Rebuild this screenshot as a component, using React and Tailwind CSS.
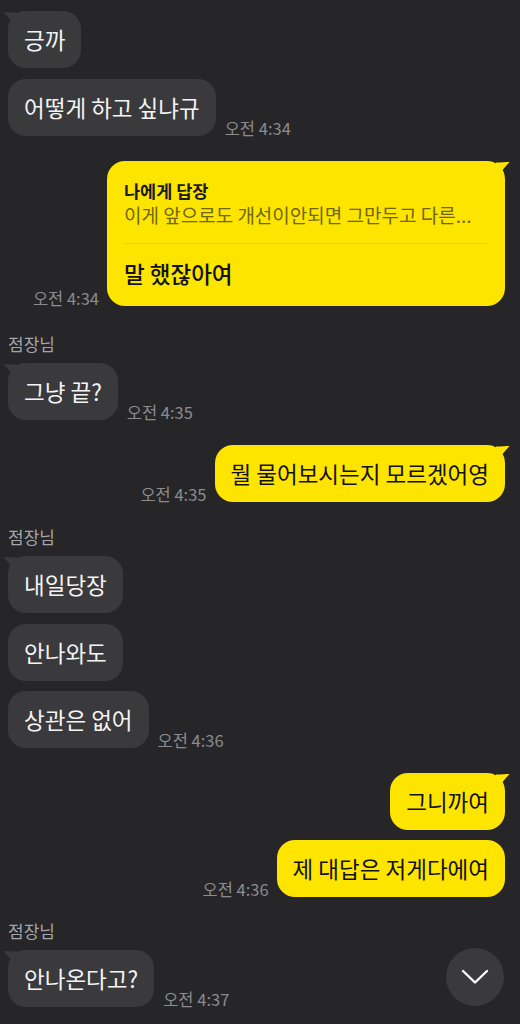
const font = { fontFamily: '"Noto Sans CJK KR", "Noto Sans", sans-serif' };

function LeftTail() {
  return (
    <svg className="absolute -left-[5px] top-0" width="14" height="18" viewBox="0 0 14 18">
      <path d="M0.5 1 C4 1 8 1.5 14 1.5 L14 18 C11 13 5 6 0.5 1 Z" fill="#3a3a3c" />
    </svg>
  );
}

function RightTail() {
  return (
    <svg className="absolute -right-[5px] top-0" width="14" height="18" viewBox="0 0 14 18">
      <path d="M13.5 1 C10 1 6 1.5 0 1.5 L0 18 C3 13 9 6 13.5 1 Z" fill="#fee500" />
    </svg>
  );
}

function Time({ children }) {
  return (
    <span className="shrink-0 text-[16.5px] leading-4 text-[#8b8b90]">
      {children}
    </span>
  );
}

function Left({ text, time, tail, className = "" }) {
  return (
    <div className={`flex items-end gap-[9px] ${className}`}>
      <div className="relative">
        {tail && <LeftTail />}
        <div className="relative rounded-[18px] bg-[#3a3a3c] px-4 py-[14px] text-[22.5px] leading-[29px] text-[#f4f4f5]">
          {text}
        </div>
      </div>
      {time && <Time>{time}</Time>}
    </div>
  );
}

function Right({ text, time, tail, className = "" }) {
  return (
    <div className={`flex items-end justify-end gap-[8px] ${className}`}>
      {time && <Time>{time}</Time>}
      <div className="relative">
        {tail && <RightTail />}
        <div className="relative rounded-[18px] bg-[#fee500] px-4 py-[14px] text-[22.5px] leading-[29px] text-[#111111]">
          {text}
        </div>
      </div>
    </div>
  );
}

function Name({ className = "" }) {
  return <div className={`text-[17px] leading-5 text-[#a5a5aa] ${className}`}>점장님</div>;
}

export default function App() {
  return (
    <div className="relative h-[1024px] w-[520px] overflow-hidden bg-[#262628]" style={font}>
      <div className="flex flex-col pl-2 pr-[15px]">
        <Left text="긍까" tail className="mt-[11px]" />
        <Left text="어떻게 하고 싶냐규" time="오전 4:34" className="mt-[11px]" />

        <div className="mt-[25px] flex items-end justify-end gap-[8px]">
          <Time>오전 4:34</Time>
          <div className="relative w-[398px]">
            <RightTail />
            <div className="relative rounded-[18px] bg-[#fee500] px-[17px] pt-[18px] pb-[18px]">
              <div className="text-[17.5px] font-bold leading-[23px] text-[#1a1a1a]">나에게 답장</div>
              <div className="whitespace-nowrap text-[19px] leading-[26px] text-[#6e6613]">
                이게 앞으로도 개선이안되면 그만두고 다른...
              </div>
              <div className="mt-[15px] h-px bg-[#e8d200]" />
              <div className="mt-[15px] text-[22.5px] font-medium leading-[29px] text-[#111111]">
                말 했잖아여
              </div>
            </div>
          </div>
        </div>

        <Name className="mt-[28px]" />
        <Left text="그냥 끝?" time="오전 4:35" tail className="mt-[9px]" />

        <Right text="뭘 물어보시는지 모르겠어영" time="오전 4:35" tail className="mt-[25px]" />

        <Name className="mt-[25px]" />
        <Left text="내일당장" tail className="mt-[9px]" />
        <Left text="안나와도" className="mt-[11px]" />
        <Left text="상관은 없어" time="오전 4:36" className="mt-[10px]" />

        <Right text="그니까여" tail className="mt-[25px]" />
        <Right text="제 대답은 저게다에여" time="오전 4:36" className="mt-[10px]" />

        <Name className="mt-[24px]" />
        <Left text="안나온다고?" time="오전 4:37" tail className="mt-[9px]" />
      </div>

      <button className="absolute left-[446px] top-[948px] flex h-[58px] w-[58px] items-center justify-center rounded-full bg-[#3a3a3c]">
        <svg width="28" height="16" viewBox="0 0 28 16" fill="none">
          <path d="M2 2 L14 13.5 L26 2" stroke="white" strokeWidth="2.4" strokeLinecap="round" strokeLinejoin="round" />
        </svg>
      </button>
    </div>
  );
}
